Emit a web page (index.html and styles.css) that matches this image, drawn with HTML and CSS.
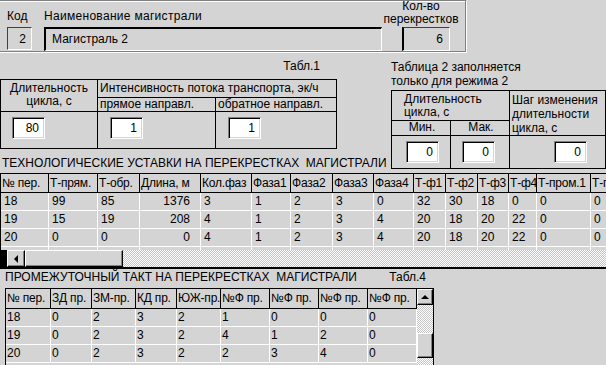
FILE: index.html
```html
<!DOCTYPE html>
<html lang="ru">
<head>
  <meta charset="UTF-8">
  <title>Магистраль</title>
  <link rel="stylesheet" href="styles.css">
</head>
<body>

  <div class="group">
    <div class="field f-code">
      <span class="lbl">Код</span>
      <div class="ro ro-code">2</div>
    </div>
    <div class="field f-name">
      <span class="lbl">Наименование магистрали</span>
      <div class="ro ro-name">Магистраль 2</div>
    </div>
    <div class="field f-count">
      <span class="lbl lbl-count">Кол-во<br>перекрестков</span>
      <div class="ro ro-count">6</div>
    </div>
  </div>

  <div class="mid">
    <div class="mid-left">
      <div class="cap1">Табл.1</div>
      <table class="tbl tbl1">
        <colgroup><col style="width:97px"><col style="width:118px"><col style="width:121px"></colgroup>
        <tr class="t1-r1">
          <td rowspan="2" class="c-center">Длительность<br>цикла, с</td>
          <td colspan="2" class="c-mid">Интенсивность потока транспорта, эк/ч</td>
        </tr>
        <tr class="t1-r2">
          <td class="c-mid">прямое направл.</td>
          <td class="c-mid">обратное направл.</td>
        </tr>
        <tr class="t1-r3">
          <td><div class="edit e-80">80</div></td>
          <td><div class="edit e-13">1</div></td>
          <td><div class="edit e-13">1</div></td>
        </tr>
      </table>
      <div class="sect">ТЕХНОЛОГИЧЕСКИЕ УСТАВКИ НА ПЕРЕКРЕСТКАХ&nbsp; МАГИСТРАЛИ</div>
    </div>

    <div class="mid-right">
      <div class="note">Таблица 2 заполняется<br>только для режима 2</div>
      <table class="tbl tbl2">
        <colgroup><col style="width:59px"><col style="width:59px"><col style="width:96px"></colgroup>
        <tr class="t2-r1">
          <td colspan="2" class="c-dur">Длительность<br>цикла, с</td>
          <td rowspan="2" class="c-step">Шаг изменения<br>длительности<br>цикла, с</td>
        </tr>
        <tr class="t2-r2">
          <td class="c-center c-mid">Мин.</td>
          <td class="c-center c-mid">Мак.</td>
        </tr>
        <tr class="t2-r3">
          <td><div class="edit e-min">0</div></td>
          <td><div class="edit e-max">0</div></td>
          <td><div class="edit e-step">0</div></td>
        </tr>
      </table>
    </div>
  </div>

  <div class="grid">
    <div class="grid-rows">
      <table class="gtable gt1">
        <colgroup>
          <col style="width:48px"><col style="width:49px"><col style="width:42px"><col style="width:61px">
          <col style="width:51px"><col style="width:39px"><col style="width:42px"><col style="width:41px">
          <col style="width:40px"><col style="width:32px"><col style="width:32px"><col style="width:31px">
          <col style="width:28px"><col style="width:54px"><col style="width:60px">
        </colgroup>
        <tr>
          <th>№ пер.</th><th>Т-прям.</th><th>Т-обр.</th><th>Длина, м</th><th>Кол.фаз</th>
          <th>Фаза1</th><th>Фаза2</th><th>Фаза3</th><th>Фаза4</th><th>Т-ф1</th>
          <th>Т-ф2</th><th>Т-ф3</th><th>Т-ф4</th><th>Т-пром.1</th><th>Т-пром.2</th>
        </tr>
        <tr>
          <td>18</td><td>99</td><td>85</td><td class="num">1376</td><td>3</td>
          <td>1</td><td>2</td><td>3</td><td>0</td><td>32</td>
          <td>30</td><td>18</td><td>0</td><td>0</td><td>0</td>
        </tr>
        <tr>
          <td>19</td><td>15</td><td>19</td><td class="num">208</td><td>4</td>
          <td>1</td><td>2</td><td>3</td><td>4</td><td>20</td>
          <td>18</td><td>20</td><td>22</td><td>0</td><td>0</td>
        </tr>
        <tr>
          <td>20</td><td>0</td><td>0</td><td class="num">0</td><td>4</td>
          <td>1</td><td>2</td><td>3</td><td>4</td><td>20</td>
          <td>18</td><td>20</td><td>22</td><td>0</td><td>0</td>
        </tr>
        <tr>
          <td></td><td></td><td></td><td></td><td></td>
          <td></td><td></td><td></td><td></td><td></td>
          <td></td><td></td><td></td><td></td><td></td>
        </tr>
      </table>
    </div>
    <div class="hscroll">
      <div class="hs-edge"></div>
      <div class="sb-btn raised"><span class="arr-left"></span></div>
      <div class="hs-thumb raised"></div>
      <div class="sb-track"></div>
    </div>
  </div>

  <div class="sect2">
    <span>ПРОМЕЖУТОЧНЫЙ ТАКТ НА ПЕРЕКРЕСТКАХ&nbsp; МАГИСТРАЛИ</span>
    <span>Табл.4</span>
  </div>

  <div class="grid2">
    <div class="grid2-rows">
      <table class="gtable gt2">
        <colgroup>
          <col style="width:45px"><col style="width:41px"><col style="width:44px"><col style="width:41px">
          <col style="width:44px"><col style="width:49px"><col style="width:49px"><col style="width:49px">
          <col style="width:49px">
        </colgroup>
        <tr>
          <th>№ пер.</th><th>ЗД пр.</th><th>ЗМ-пр.</th><th>КД пр.</th><th>ЮЖ-пр.</th>
          <th>№Ф пр.</th><th>№Ф пр.</th><th>№Ф пр.</th><th>№Ф пр.</th>
        </tr>
        <tr><td>18</td><td>0</td><td>2</td><td>3</td><td>2</td><td>1</td><td>0</td><td>0</td><td>0</td></tr>
        <tr><td>19</td><td>0</td><td>2</td><td>3</td><td>2</td><td>4</td><td>1</td><td>2</td><td>0</td></tr>
        <tr><td>20</td><td>0</td><td>2</td><td>3</td><td>2</td><td>2</td><td>3</td><td>4</td><td>0</td></tr>
      </table>
    </div>
    <div class="vscroll">
      <div class="sb-btn vs-btn raised"><span class="arr-up"></span></div>
      <div class="sb-track vs-track1"></div>
      <div class="vs-thumb raised"></div>
      <div class="sb-track"></div>
    </div>
  </div>

</body>
</html>
```

FILE: styles.css
```css
* {
  box-sizing: border-box;
}
body {
  margin: 0;
  width: 606px;
  height: 365px;
  overflow: hidden;
  background: #d4d4d4;
  color: #000;
  font: 12px/13px "Liberation Sans", Arial, sans-serif;
}

/* top group box */
.group {
  display: flex;
  align-items: flex-end;
  width: 470px;
  height: 52px;
  margin-left: -4px;
  padding-left: 10px;
  border: 1px solid #808080;
  box-shadow: 1px 1px 0 #fff, inset 1px 1px 0 #fff;
}
.field {
  display: flex;
  flex-direction: column;
}
.lbl {
  margin-bottom: 4px;
  white-space: nowrap;
}
.lbl-count {
  text-align: center;
  margin-bottom: 1px;
}
.f-code {
  width: 25px;
  margin-right: 12px;
}
.f-name {
  width: 338px;
}
.f-name .lbl {
  letter-spacing: 0.3px;
}
.f-count {
  width: 78px;
}
.ro {
  height: 24px;
  padding: 0 5px;
  border: 1px solid;
  border-color: #404040 #fff #fff #404040;
  line-height: 22px;
}
.ro-code {
  height: 23px;
  margin-bottom: 1px;
  text-align: right;
}
.ro-name {
  border-width: 2px 1px 1px 2px;
  border-color: #000 #fff #fff #000;
  padding-left: 6px;
  line-height: 20px;
}
.ro-count {
  width: 48px;
  margin-left: 20px;
  border-left-width: 2px;
  border-left-color: #000;
  text-align: right;
  padding-right: 6px;
}

/* tables 1 and 2 */
.mid {
  display: flex;
  height: 121px;
}
.mid-left {
  width: 391px;
  flex: none;
}
.mid-right {
  width: 215px;
  flex: none;
}
.cap1 {
  width: 336px;
  margin-top: 8px;
  padding-right: 16px;
  text-align: right;
}
.note {
  margin-top: 8px;
  line-height: 14px;
  white-space: nowrap;
}
.tbl {
  border-collapse: separate;
  border-spacing: 0;
  table-layout: fixed;
  border-top: 1px solid #000;
  border-left: 1px solid #000;
}
.tbl td {
  padding: 0;
  border-right: 1px solid #000;
  border-bottom: 1px solid #000;
  vertical-align: top;
  white-space: nowrap;
  overflow: hidden;
}
.tbl1 {
  width: 337px;
  margin-top: 6px;
}
.tbl2 {
  width: 215px;
  margin-top: 2px;
}
.t1-r1 { height: 18px; }
.t1-r2 { height: 14px; }
.t1-r3 { height: 37px; }
.t2-r1 { height: 26px; }
.t2-r2 { height: 15px; }
.t2-r3 { height: 33px; }
.tbl td.c-center {
  text-align: center;
  padding-top: 2px;
}
.tbl td.c-mid {
  vertical-align: middle;
  padding-left: 2px;
  padding-top: 0;
}
.tbl td.c-dur {
  padding: 2px 0 0 12px;
}
.tbl td.c-step {
  padding: 2px 0 0 2px;
  line-height: 14px;
}
.edit {
  width: 33px;
  height: 22px;
  margin-top: 5px;
  padding-right: 5px;
  background: #fff;
  border: 1px solid;
  border-color: #808080 #fff #fff #808080;
  box-shadow: inset 1px 1px 0 #000, inset -1px -1px 0 #d4d4d4;
  text-align: right;
  line-height: 20px;
}
.e-80 { margin-left: 11px; }
.e-13 { margin-left: 12px; }
.e-min { margin-left: 14px; }
.e-max { margin-left: 11px; }
.e-step { margin-left: 44px; }
.sect {
  margin-top: 8px;
  padding-left: 2px;
  white-space: nowrap;
}

/* data grids */
.grid {
  width: 606px;
  border: solid #000;
  border-width: 1px 0 2px 1px;
  overflow: hidden;
}
.grid-rows {
  height: 76px;
  overflow: hidden;
}
.gtable {
  border-collapse: separate;
  border-spacing: 0;
  table-layout: fixed;
}
.gt1 {
  width: 650px;
}
.gtable th {
  height: 19px;
  padding: 0 0 0 1px;
  font-weight: normal;
  text-align: left;
  letter-spacing: -0.2px;
  white-space: nowrap;
  overflow: hidden;
  border-right: 1px solid #000;
  border-bottom: 1px solid #000;
}
.gtable td {
  height: 18px;
  padding: 0 0 0 3px;
  white-space: nowrap;
  overflow: hidden;
  border-right: 1px solid #fff;
  border-bottom: 1px solid #fff;
}
.gtable td.num {
  text-align: right;
  padding-right: 10px;
}
.raised {
  background: #d4d4d4;
  border: 1px solid;
  border-color: #fff #000 #000 #fff;
  box-shadow: inset -1px -1px 0 #808080;
}
.sb-track {
  flex: 1;
  background: conic-gradient(#fff 25%, #c4c4c4 0 50%, #fff 0 75%, #c4c4c4 0) 0 0 / 2px 2px;
}
.hscroll {
  display: flex;
  height: 17px;
}
.hs-edge {
  width: 6px;
  background: #000;
}
.sb-btn {
  width: 18px;
  display: flex;
  align-items: center;
  justify-content: center;
}
.hs-thumb {
  width: 98px;
}
.arr-left {
  border-top: 4px solid transparent;
  border-bottom: 4px solid transparent;
  border-right: 4px solid #000;
}
.arr-up {
  border-left: 4px solid transparent;
  border-right: 4px solid transparent;
  border-bottom: 4px solid #000;
}

.sect2 {
  display: flex;
  justify-content: space-between;
  width: 428px;
  margin-top: 2px;
  padding: 0 2px 0 5px;
  white-space: nowrap;
}
.grid2 {
  display: flex;
  width: 429px;
  height: 80px;
  margin: 4px 0 0 5px;
  border: solid #000;
  border-width: 1px 1px 0 1px;
}
.grid2-rows {
  width: 411px;
  flex: none;
  overflow: hidden;
}
.gt2 {
  width: 411px;
}
.gt2 th {
  height: 20px;
  padding-left: 1px;
}
.gt2 td {
  padding-left: 1px;
}
.vscroll {
  width: 16px;
  display: flex;
  flex-direction: column;
}
.vs-btn {
  width: 16px;
  height: 16px;
}
.vs-track1 {
  flex: none;
  height: 28px;
}
.vs-thumb {
  height: 25px;
}
```
